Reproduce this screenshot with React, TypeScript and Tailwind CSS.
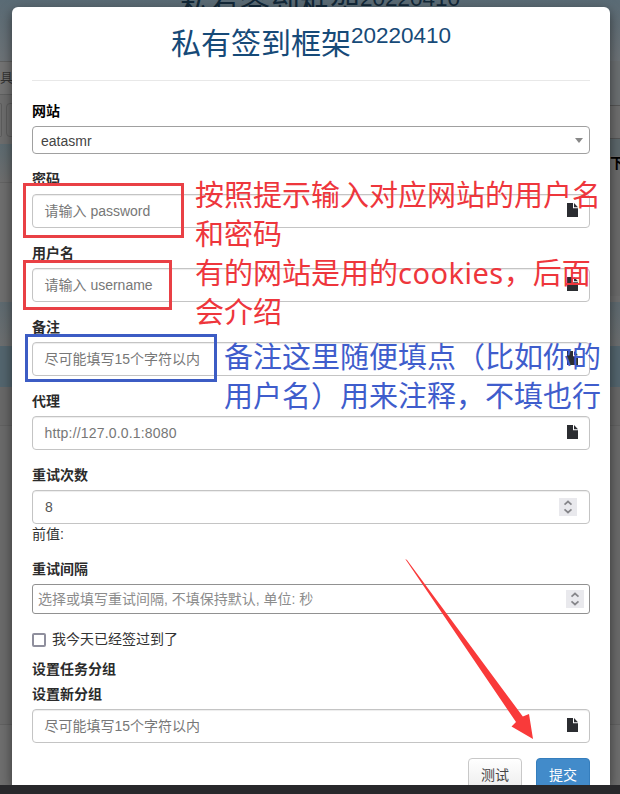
import React from "react";

function FileIcon() {
  return (
    <svg viewBox="0 0 11 14" className="mb-0.5 h-3.5 w-[11px] shrink-0" fill="#2b2d31">
      <path d="M0 0H6V5.3H11V14H0Z" />
      <path d="M7 0L11 4.2H7Z" />
    </svg>
  );
}

function Spinner() {
  return (
    <span className="flex h-[18px] w-[18px] shrink-0 items-center justify-center bg-[#e9e9ed]">
      <svg viewBox="0 0 18 18" className="h-[18px] w-[18px]" fill="none" stroke="#86868a" strokeWidth="1.7">
        <path d="M5.5 6.7L9 3.5L12.5 6.7M5.5 11.3L9 14.5L12.5 11.3" />
      </svg>
    </span>
  );
}

function Label({ children }: { children: React.ReactNode }) {
  return <div className="mb-[5px] h-5 font-bold leading-5 text-[#2b2b2b]">{children}</div>;
}

function TextField({ label, hint }: { label: string; hint: string }) {
  return (
    <div className="mb-[15px]">
      <Label>{label}</Label>
      <div className="flex h-[34px] items-center justify-between rounded border border-[#c4c4c4] bg-white pl-[11.5px] pr-[11px] text-[#777] shadow-[inset_0_1px_1px_rgba(0,0,0,0.075)]">
        <span className={hint.startsWith("http") ? "leading-5 tracking-[0.18px]" : "leading-5"}>{hint}</span>
        <FileIcon />
      </div>
    </div>
  );
}

function Backdrop() {
  return (
    <div className="absolute inset-0 flex flex-col bg-[#6e6e6e] text-black">
      <div className="h-[61px] shrink-0 bg-linear-to-b from-[#5a6b75] to-[#6c7276]" />
      <div className="flex h-[34px] shrink-0 items-center border-y border-[#5f6060] bg-[#737373] text-[13px] text-[#333]">具</div>
      <div className="flex h-[49px] shrink-0 items-center bg-[#6d6d6d]">
        <div className="h-[34px] w-[2px] rounded-r border border-l-0 border-[#5c5c5c]" />
        <div className="ml-1 h-[34px] w-20 rounded border border-[#5c5c5c]" />
      </div>
      <div className="h-[38px] shrink-0 bg-linear-to-b from-[#5c6a70] to-[#6d6d6d]" />
      <div className="h-[120px] shrink-0 border-t border-[#636363] bg-[#6e6e6e]" />
      <div className="h-11 shrink-0 bg-linear-to-b from-[#5e6a70] to-[#6c6e6f]" />
      <div className="h-[41px] shrink-0 bg-[#53656e]" />
      <div className="h-[39px] shrink-0 border-b border-[#616161] bg-[#686868]" />
      <div className="h-[299px] shrink-0 border-b border-[#616161] bg-[#6a6a6a]" />
      <div className="absolute right-0 top-[61px] h-11 w-5 bg-[#6b6f71]" />
      <div className="absolute right-0 top-[105px] h-[34px] w-5 border-y border-[#555] bg-[#6e6e6e]" />
      <div className="absolute right-0 top-[139px] h-[17px] w-5 bg-[#5c676b]" />
      <div className="absolute right-0 top-[156px] h-[140px] w-5 bg-[#6a6a6a]" />
      <div className="absolute left-[610px] top-[153px] whitespace-nowrap text-sm font-bold leading-5">下</div>
      <div className="absolute left-[180px] top-[-14px] whitespace-nowrap text-[30px] leading-[42px] text-[#122838]">
        私有签到框架<sup className="relative top-[-0.5em] align-baseline text-[22.5px] leading-none">20220410</sup>
      </div>
    </div>
  );
}

function Dialog() {
  return (
    <div className="relative ml-3 mt-[7px] h-[778px] w-[598px] shrink-0 overflow-hidden rounded-t-[6px] bg-white px-5 text-sm">
      <h1 className="flex h-[74px] items-start justify-center border-b border-[#e8e8e8] pt-4">
        <span className="whitespace-nowrap text-[30px] font-normal leading-[42px] text-[#164a78]">
          私有签到框架<sup className="relative top-[-0.5em] align-baseline text-[22.5px] leading-none">20220410</sup>
        </span>
      </h1>
      <div className="pt-5">
        <div className="mb-[15px]">
          <div className="mb-[5px] h-5 font-bold leading-5 text-black">网站</div>
          <div className="flex h-7 items-center justify-between rounded border border-[#a0a0a0] pl-2 pr-[6px] text-[#444]">
            <span className="pt-px">eatasmr</span>
            <span className="border-x-4 border-t-5 border-x-transparent border-t-[#888]" />
          </div>
        </div>
        <TextField label="密码" hint="请输入 password" />
        <TextField label="用户名" hint="请输入 username" />
        <TextField label="备注" hint="尽可能填写15个字符以内" />
        <TextField label="代理" hint="http://127.0.0.1:8080" />
        <Label>重试次数</Label>
        <div className="flex h-[34px] items-center justify-between rounded border border-[#c4c4c4] px-3 text-[#555] shadow-[inset_0_1px_1px_rgba(0,0,0,0.075)]">
          <span>8</span>
          <Spinner />
        </div>
        <div className="mb-[15px] h-5 leading-5 text-[#333]">前值:</div>
        <Label>重试间隔</Label>
        <div className="flex h-[30px] items-center justify-between rounded-[3px] border border-[#919191] pl-[5px] pr-[5px] text-[#8c8c8c]">
          <span>选择或填写重试间隔, 不填保持默认, 单位: 秒</span>
          <Spinner />
        </div>
        <div className="mt-[15px] flex h-5 items-center text-[#333]">
          <span className="mt-px h-3.5 w-3.5 rounded-xs border-2 border-[#8f8f9d] bg-white" />
          <span className="ml-[6px] leading-5">我今天已经签过到了</span>
        </div>
        <div className="pt-2.5">
          <Label>设置任务分组</Label>
        </div>
        <TextField label="设置新分组" hint="尽可能填写15个字符以内" />
        <div className="flex justify-end gap-3.5 text-sm leading-5">
          <button className="h-[34px] w-[54px] rounded border border-[#c8c8c8] bg-linear-to-b from-white to-[#ececec] text-[#444]">测试</button>
          <button className="h-[34px] w-[54px] rounded border border-[#357ebd] bg-[#428bca] text-white">提交</button>
        </div>
      </div>
    </div>
  );
}

function Annotations() {
  return (
    <div className="pointer-events-none absolute inset-0">
      <div className="absolute left-[23px] top-[183px] h-[55px] w-[161px] border-3 border-[#e94045]" />
      <div className="absolute left-[23px] top-[260px] h-[50px] w-[149px] border-3 border-[#e94045]" />
      <div className="absolute left-[25px] top-[334px] h-[48px] w-[192px] border-3 border-[#3c5cc4]" />
      <div className="absolute left-[195px] top-[177px] whitespace-nowrap text-[29px] leading-[39px] text-[#ee363c]">
        <div className="h-[39px]">按照提示输入对应网站的用户名</div>
        <div className="h-[39px]">和密码</div>
        <div className="h-[39px]">
          有的网站是用的<span className="font-['Noto_Sans'] leading-none tracking-[0.5px]">cookies</span>，后面
        </div>
        <div className="h-[39px]">会介绍</div>
      </div>
      <div className="absolute left-[224px] top-[339px] whitespace-nowrap text-[29px] leading-[39px] text-[#3f5dcc]">
        <div>备注这里随便填点（比如你的</div>
        <div>用户名）用来注释，不填也行</div>
      </div>
      <svg viewBox="0 0 620 794" className="absolute inset-0 h-full w-full" fill="#f93a3a">
        <path d="M405.3 559L407 560L522.8 716.5L529 714L533 739L511.5 726.5L516 722Z" />
      </svg>
    </div>
  );
}

export default function App() {
  return (
    <div className="relative flex h-[794px] w-[620px] flex-col overflow-hidden bg-[#6e6e6e] font-['Liberation_Sans','Noto_Sans_CJK_SC',sans-serif]">
      <Backdrop />
      <div className="absolute left-3 top-[7px] h-[778px] w-[598px] rounded-t-[6px] shadow-[0_4px_12px_rgba(0,0,0,0.5)]" />
      <Dialog />
      <div className="relative h-[9px] shrink-0 bg-[#28282b]" />
      <Annotations />
    </div>
  );
}
